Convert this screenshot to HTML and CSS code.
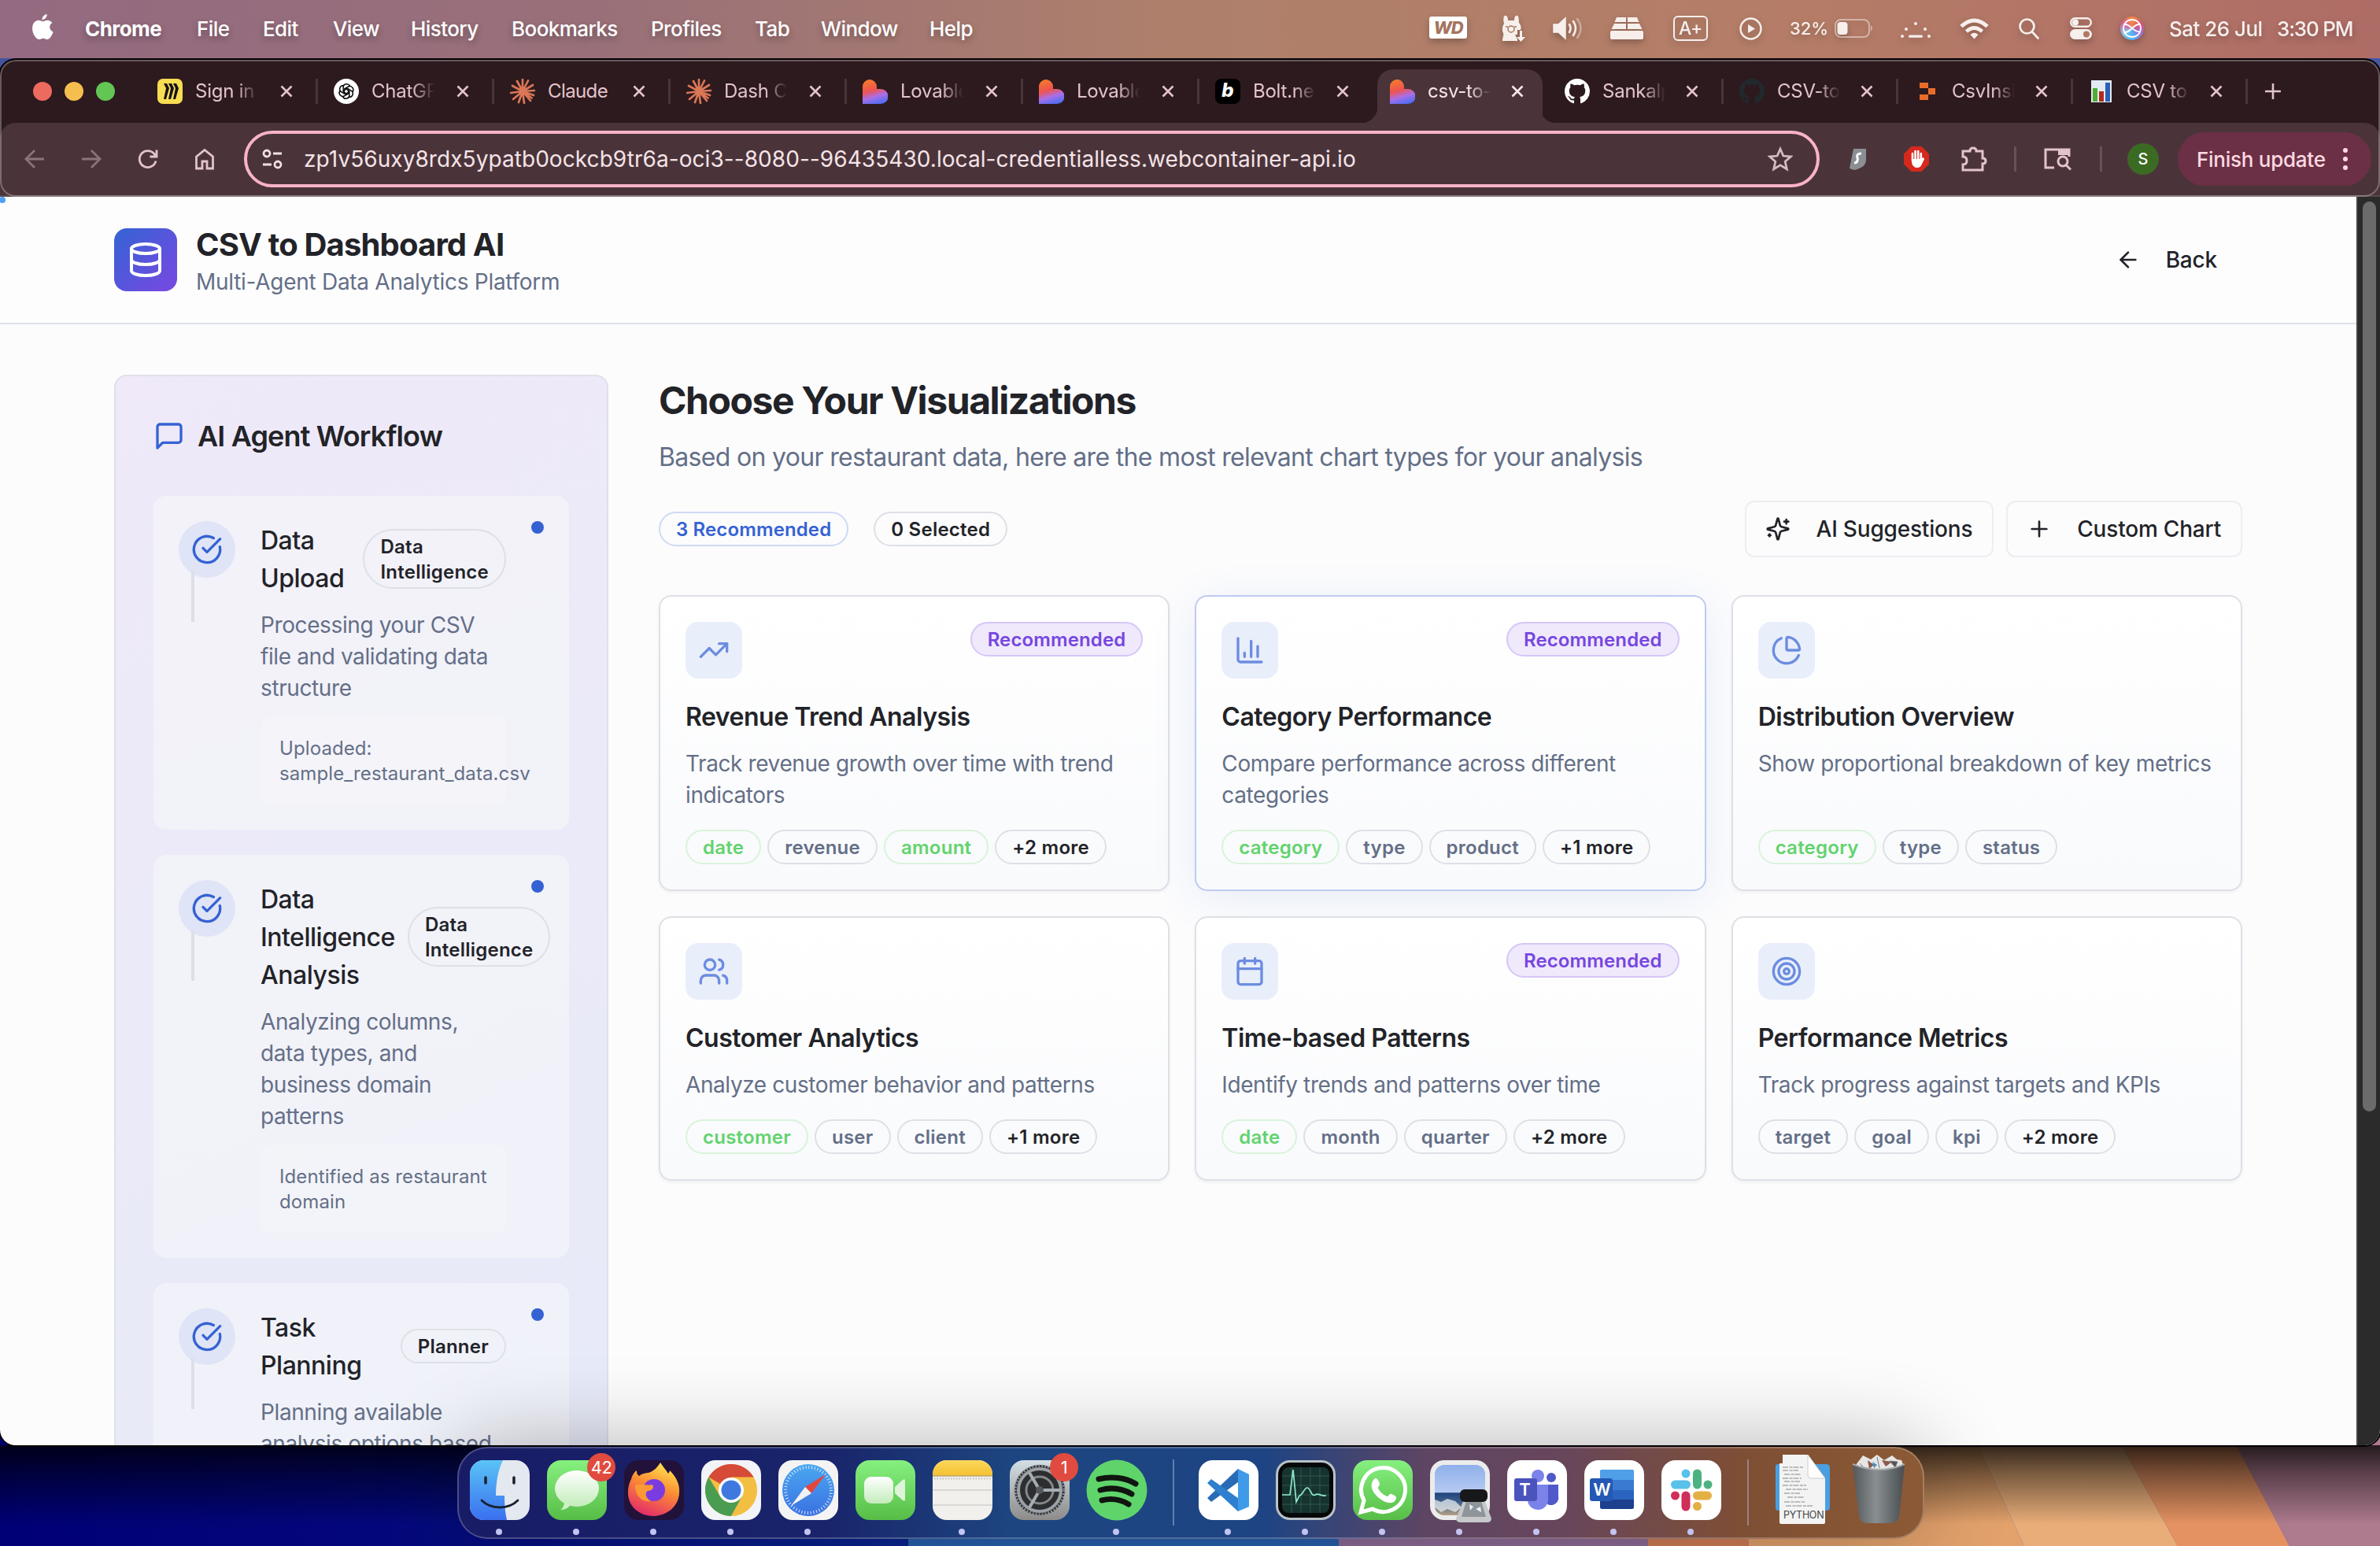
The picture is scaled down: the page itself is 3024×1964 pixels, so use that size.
FILE: index.html
```html
<!DOCTYPE html>
<html lang="en">
<head>
<meta charset="utf-8">
<title>CSV to Dashboard AI</title>
<link rel="stylesheet" href="styles.css">
</head>
<body>
<svg class="defs" width="0" height="0" aria-hidden="true">
  <defs>
    <linearGradient id="heartFill" x1="0.3" y1="0" x2="0.6" y2="1"><stop offset="0" stop-color="#f5792c"/><stop offset=".42" stop-color="#ee5350"/><stop offset=".7" stop-color="#a96fe8"/><stop offset="1" stop-color="#4f6df2"/></linearGradient>
    <linearGradient id="finderBlue" x1="0" y1="0" x2="0" y2="1"><stop offset="0" stop-color="#5ac4f6"/><stop offset="1" stop-color="#3a6ff0"/></linearGradient>
    <linearGradient id="greenFill" x1="0" y1="0" x2="0" y2="1"><stop offset="0" stop-color="#86f07f"/><stop offset="1" stop-color="#57bd47"/></linearGradient>
    <linearGradient id="bubbleFill" x1="0" y1="0" x2="0" y2="1"><stop offset="0" stop-color="#fff"/><stop offset="1" stop-color="#c3ecba"/></linearGradient>
    <linearGradient id="fireFill" x1="0.7" y1="0" x2="0.3" y2="1"><stop offset="0" stop-color="#ffe54e"/><stop offset=".45" stop-color="#fb8b34"/><stop offset="1" stop-color="#e3296b"/></linearGradient>
    <linearGradient id="safariFill" x1="0" y1="0" x2="0" y2="1"><stop offset="0" stop-color="#4aa8f0"/><stop offset="1" stop-color="#3a70e2"/></linearGradient>
    <linearGradient id="greyFill" x1="0" y1="0" x2="0" y2="1"><stop offset="0" stop-color="#d3dfe6"/><stop offset="1" stop-color="#8d8c8a"/></linearGradient>
    <linearGradient id="notesTop" x1="0" y1="0" x2="0" y2="1"><stop offset="0" stop-color="#fbd85c"/><stop offset="1" stop-color="#f5c02f"/></linearGradient>
    <linearGradient id="binFill" x1="0" y1="0" x2="1" y2="0"><stop offset="0" stop-color="#53585b"/><stop offset=".45" stop-color="#8a8f92"/><stop offset="1" stop-color="#474c4f"/></linearGradient>
    <linearGradient id="skyFill" x1="0" y1="0" x2="0" y2="1"><stop offset="0" stop-color="#8fb0ea"/><stop offset=".54" stop-color="#b5caf2"/><stop offset=".56" stop-color="#23457e"/><stop offset=".74" stop-color="#3f5f8a"/><stop offset="1" stop-color="#b3a084"/></linearGradient>
    <linearGradient id="shadeFill" x1="0" y1="0" x2="0" y2="1"><stop offset="0" stop-color="#000" stop-opacity=".78"/><stop offset=".35" stop-color="#000" stop-opacity=".48"/><stop offset="1" stop-color="#000" stop-opacity="0"/></linearGradient>
    <linearGradient id="blueFill" x1="0" y1="0" x2="1" y2="0"><stop offset="0" stop-color="#000074"/><stop offset=".4" stop-color="#03067a"/><stop offset="1" stop-color="#0b2590"/></linearGradient>
    <symbol id="close" viewBox="0 0 16 16"><path d="M1.5 1.5 14.5 14.5M14.5 1.5 1.5 14.5" stroke="currentColor" stroke-width="2.6" fill="none"/></symbol>
    <symbol id="heart" viewBox="0 0 32 32"><path d="M0 32V10a9 9 0 0 1 18 0v3h5a9.500 9.500 0 0 1 0 19z" fill="url(#heartFill)"/></symbol>
    <symbol id="burst" viewBox="0 0 32 32"><path d="M16 16 16 1M16 16 23 2.500M16 16 29 8M16 16 31 15M16 16 30 21M16 16 26 28M16 16 18 31M16 16 11 30M16 16 4 26M16 16 1 18M16 16 3 9M16 16 9 3M16 16 27.500 24.500" stroke="#d97757" stroke-width="2.700" stroke-linecap="round"/></symbol>
    <symbol id="cat" viewBox="0 0 16 16"><path fill="currentColor" d="M8 0C3.580 0 0 3.580 0 8c0 3.540 2.290 6.530 5.470 7.590.4.070.55-.17.55-.38 0-.19-.010-.82-.010-1.490-2.010.37-2.530-.49-2.690-.94-.090-.23-.48-.94-.82-1.130-.28-.15-.68-.52-.010-.53.630-.010 1.080.58 1.230.82.72 1.210 1.870.87 2.330.66.070-.52.280-.87.510-1.070-1.780-.2-3.640-.89-3.640-3.950 0-.87.310-1.590.82-2.150-.080-.2-.36-1.020.080-2.120 0 0 .67-.21 2.200.82.640-.18 1.320-.27 2-.27s1.360.090 2 .27c1.530-1.040 2.200-.82 2.200-.82.440 1.100.160 1.920.080 2.120.510.560.820 1.270.820 2.150 0 3.070-1.870 3.750-3.650 3.950.290.250.540.730.540 1.480 0 1.070-.010 1.930-.010 2.200 0 .210.150.460.550.380A8 8 0 0 0 16 8c0-4.420-3.580-8-8-8z"/></symbol>
    <symbol id="check" viewBox="0 0 24 24"><path d="M21.801 10A10 10 0 1 1 17 3.335"/><path d="m9 11 3 3L22 4"/></symbol>
  </defs>
</svg>

<svg class="wallpaper" viewBox="0 0 3024 1964" aria-hidden="true">
  <rect width="3024" height="1964" fill="#45559f"/>
  <rect y="1700" width="1160" height="264" fill="url(#blueFill)"/>
  <path d="M1154 1700h548v264h-548z" fill="#2860ad"/>
  <path d="M1701 1700h380l13 264h-393z" fill="#8f6c98"/>
  <path d="M2080 1700h120l22 264h-128z" fill="#d17d55"/>
  <path d="M2200 1700h250l122 264h-350z" fill="#e3a26c"/>
  <path d="M2450 1700h170l147 264h-195z" fill="#e8ad79"/>
  <path d="M2620 1700h150l139 264h-142z" fill="#e59262"/>
  <path d="M2769 1700h255v264h-115z" fill="#ad7a8e"/>
  <rect y="1836" width="3024" height="100" fill="url(#shadeFill)"/>
</svg>

<header class="menubar">
  <svg class="apple" viewBox="0 0 26 32"><path fill="#fff" d="M18 0c.3 3.600-2.800 7-6 7C11.600 3.800 14.800.4 18 0zM13 9c1.300 0 3-1.500 5.600-1.500 2.600 0 4.800 1.500 5.900 3.200-4.600 2.800-3.900 9 1.200 11-1.500 4.500-4.300 9.300-7.200 9.300-2 0-2.600-1.300-5-1.300s-3.200 1.300-5 1.300C4.600 31 0 24.300 0 17.600 0 11 4 7.600 7.700 7.600 10.200 7.600 11.800 9 13 9z"/></svg>
  <nav class="menus"><b>Chrome</b><span>File</span><span>Edit</span><span>View</span><span>History</span><span>Bookmarks</span><span>Profiles</span><span>Tab</span><span>Window</span><span>Help</span></nav>
  <div class="status">
    <span class="wd">WD</span>
    <svg width="30" height="34" viewBox="0 0 30 34"><path fill="#f6efec" d="M4 1c3-1 4 3 4 6h8c0-3 1-7 4-6 2 1 2 7 2 9 3 3 3 7 2 9h-4v6h-3l3 6v2H1c0-5 2-7 1-10-2-4-1-9 1-12C2 6 2 2 4 1z"/><path fill="#f6efec" d="M23 20h3v8h4l-5.500 6L19 28h4z"/><circle cx="12" cy="18" r="4" fill="none" stroke="#a87662" stroke-width="1.500"/><path d="M5 15h3m8 0h3" stroke="#a87662" stroke-width="1.500"/></svg>
    <svg width="38" height="30" viewBox="0 0 38 30" fill="none" stroke="#f6efec" stroke-width="2.600" stroke-linecap="round"><path d="M1 10h6l9-8v26l-9-8H1z" fill="#f6efec" stroke-width="1.500"/><path d="M21 10q3 5 0 10M26 6q6 9 0 18"/><path d="M31 3q9 12 0 24" opacity=".4"/></svg>
    <svg width="42" height="30" viewBox="0 0 42 30" fill="#f6efec"><path d="M8 1h12v6H5.500zM22 1h12l2.500 6H22zM5 9h15v7H1.500zM22 9h15l3.500 7H22z"/><rect y="18" width="42" height="11" rx="2"/></svg>
    <span class="aplus">A+</span>
    <svg width="29" height="29" viewBox="0 0 29 29"><circle cx="14.500" cy="14.500" r="13" fill="none" stroke="#f6efec" stroke-width="2.400"/><path d="M11 9v11l9-5.500z" fill="#f6efec"/></svg>
    <span class="pct">32%</span>
    <svg width="50" height="24" viewBox="0 0 50 24"><rect x="1" y="1" width="43" height="22" rx="7" fill="none" stroke="#f6efec" stroke-opacity=".5" stroke-width="2"/><rect x="3.500" y="4" width="13" height="16" rx="4" fill="#f6efec"/><path d="M46 8q4 4 0 8z" fill="#f6efec" opacity=".5"/></svg>
    <svg class="low" width="38" height="20" viewBox="0 0 38 20" fill="#f6efec"><circle cx="19" cy="2" r="2"/><circle cx="7" cy="9" r="2"/><circle cx="31" cy="9" r="2"/><circle cx="2" cy="18" r="2"/><rect x="10" y="16.500" width="18" height="3.200" rx="1.500"/><circle cx="36" cy="18" r="2"/></svg>
    <svg width="37" height="27" viewBox="0 0 37 27" fill="none" stroke="#f6efec" stroke-width="5"><path d="M2 10.500q16.500-15 33 0M8.500 17q10-9 20 0"/><path d="M18.500 26.500l-5-5.500q5-4.500 10 0z" fill="#f6efec" stroke="none"/></svg>
    <svg width="26" height="27" viewBox="0 0 26 27" fill="none" stroke="#f6efec" stroke-width="2.700" stroke-linecap="round"><circle cx="10.500" cy="10.500" r="9"/><path d="m17.500 18 7 7.500"/></svg>
    <svg width="28" height="28" viewBox="0 0 28 28"><rect x="1.200" y="1.200" width="25.600" height="10.600" rx="5.300" fill="none" stroke="#f6efec" stroke-width="2.400"/><circle cx="7" cy="6.500" r="4" fill="#f6efec"/><rect y="15" width="28" height="13" rx="6.500" fill="#f6efec"/><circle cx="21" cy="21.500" r="4" fill="#b27763"/></svg>
    <span class="siri"><svg width="30" height="30" viewBox="0 0 30 30" fill="none" stroke="#fff" stroke-width="1.800"><circle cx="15" cy="15" r="11"/><path d="M6 10c8 0 10 10 18 9M6 20c8 0 10-10 18-10"/></svg></span>
    <span class="date">Sat 26 Jul</span><span class="time">3:30 PM</span>
  </div>
</header>

<main class="window">
  <div class="tabstrip">
    <div class="lights"><i class="red"></i><i class="yellow"></i><i class="green"></i></div>
    <div class="tab"><span class="fav miro"><svg viewBox="0 0 32 32"><path d="M8 6h4l3 6-4 14H8l3-14zM14 6h4l3 6-4 14h-3l3-14zM20 6h4l3 6-4 14h-3l3-14z" fill="#14121c"/></svg></span><span class="label">Sign in</span><svg class="x"><use href="#close"/></svg></div>
    <div class="tab"><span class="fav gpt"><svg viewBox="0 0 32 32" fill="none" stroke="#111" stroke-width="1.500"><g id="petal"><path d="M12 10.500a4.600 4.600 0 0 1 8.500-1.500l-7 4v6.500"/></g><use href="#petal" transform="rotate(60 16 16)"/><use href="#petal" transform="rotate(120 16 16)"/><use href="#petal" transform="rotate(180 16 16)"/><use href="#petal" transform="rotate(240 16 16)"/><use href="#petal" transform="rotate(300 16 16)"/></svg></span><span class="label">ChatGP</span><svg class="x"><use href="#close"/></svg></div>
    <div class="tab"><svg class="fav"><use href="#burst"/></svg><span class="label whole">Claude</span><svg class="x"><use href="#close"/></svg></div>
    <div class="tab"><svg class="fav"><use href="#burst"/></svg><span class="label">Dash C</span><svg class="x"><use href="#close"/></svg></div>
    <div class="tab"><svg class="fav"><use href="#heart"/></svg><span class="label">Lovable</span><svg class="x"><use href="#close"/></svg></div>
    <div class="tab"><svg class="fav"><use href="#heart"/></svg><span class="label">Lovable</span><svg class="x"><use href="#close"/></svg></div>
    <div class="tab slim bare"><span class="fav bolt">b</span><span class="label">Bolt.ne</span><svg class="x"><use href="#close"/></svg></div>
    <div class="tab slim active"><svg class="fav"><use href="#heart"/></svg><span class="label">csv-to-</span><svg class="x"><use href="#close"/></svg></div>
    <div class="tab slim"><svg class="fav white"><use href="#cat"/></svg><span class="label">Sankalp</span><svg class="x"><use href="#close"/></svg></div>
    <div class="tab slim"><svg class="fav dark"><use href="#cat"/></svg><span class="label">CSV-to</span><svg class="x"><use href="#close"/></svg></div>
    <div class="tab slim"><svg class="fav" viewBox="0 0 32 32" fill="#ea6c2a"><path d="M7 5h11v7H7zM18 12h9v8h-9zM7 20h11v7H7z"/></svg><span class="label">CsvInsi</span><svg class="x"><use href="#close"/></svg></div>
    <div class="tab slim"><svg class="fav" viewBox="0 0 32 32"><path fill="#e3ebf2" d="M3 2h26v28H3z"/><path fill="#4fae31" d="M5 12h6v17H5z"/><path fill="#b32a1c" d="M13 16h6v13h-6z"/><path fill="#2c5fb8" d="M21 5h6v24h-6z"/></svg><span class="label">CSV to</span><svg class="x"><use href="#close"/></svg></div>
    <svg class="newtab" viewBox="0 0 22 22"><path d="M11 1v20M1 11h20" stroke="currentColor" stroke-width="2.600"/></svg>
  </div>

  <div class="toolbar">
    <div class="navs">
      <svg viewBox="0 0 26 26" class="dim"><path d="M25 13H2M13 2 2 13l11 11"/></svg>
      <svg viewBox="0 0 26 26" class="dim"><path d="M1 13h23M13 2l11 11-11 11"/></svg>
      <svg viewBox="0 0 26 26"><path d="M23 15.500A10.500 10.500 0 1 1 21 6.500L24 10M24 1.500v8.500h-8.500"/></svg>
      <svg viewBox="0 0 26 28"><path d="M2.500 11 13 2.500 23.500 11v15H16v-9h-6v9H2.500z"/></svg>
    </div>
    <div class="omnibox">
      <svg class="tune" viewBox="0 0 26 26"><circle cx="6" cy="6" r="4"/><path d="M14 6h11M1 20h11"/><circle cx="20" cy="20" r="4"/></svg>
      <span class="url">zp1v56uxy8rdx5ypatb0ockcb9tr6a-oci3--8080--96435430.local-credentialless.webcontainer-api.io</span>
      <svg class="star" viewBox="0 0 30 30"><path d="m15 3 3.600 8.300 9 .8-6.800 6 2 8.900L15 22.300 7.200 27l2-8.900-6.800-6 9-.8z"/></svg>
    </div>
    <div class="exts">
      <svg width="24" height="30" viewBox="0 0 24 30"><path d="M7 2h16v14c0 7-6 11-15 13l-6-2z" fill="#8b8f93"/><path d="M17 8c-5 0-6 2-5 5s0 7-4 7" stroke="#fff" stroke-width="3" fill="none"/></svg>
      <svg width="32" height="32" viewBox="0 0 32 32"><path d="M9.500 0h13L32 9.500v13L22.500 32h-13L0 22.500v-13z" fill="#d7281d"/><path d="M11 9v11q1 6 6 6 4 0 5-4l3-6q-1-2-3 1V9" stroke="#fff" stroke-width="2" stroke-linejoin="round" stroke-linecap="round" fill="none"/><path d="M11 16h11v6q-2 4-5 4-5 0-6-6z" fill="#fff"/><path d="M11 9v9M14.600 6v12M18.200 6v12M21.800 9v9" stroke="#fff" stroke-width="2.600" stroke-linecap="round"/></svg>
      <svg width="34" height="32" viewBox="0 0 34 32" fill="none" stroke="#e3c3cc" stroke-width="3"><path d="M3 6h9q0-4 4-4t4 4h8v9q4 0 4 3.500T28 22v8H3v-7q5 0 5-5t-5-5z"/></svg>
      <i></i>
      <svg width="36" height="30" viewBox="0 0 36 30" fill="none" stroke="#e3c3cc" stroke-width="3"><path d="M14 26H3V3h30v9"/><path d="M19 3h14v7H19z" fill="#e3c3cc" stroke="none"/><circle cx="25" cy="18" r="6"/><path d="m29 22.500 6 6"/></svg>
      <i></i>
      <b class="avatar">S</b>
      <span class="finish">Finish update<svg width="6" height="30" viewBox="0 0 6 30" fill="#ffd9e2"><circle cx="3" cy="4" r="3"/><circle cx="3" cy="15" r="3"/><circle cx="3" cy="26" r="3"/></svg></span>
    </div>
  </div>

  <div class="viewport">
    <div class="page">
      <header class="apphead">
        <div class="brand">
          <span class="logo"><svg class="lu" viewBox="0 0 24 24"><ellipse cx="12" cy="5" rx="9" ry="3"/><path d="M3 5V19A9 3 0 0 0 21 19V5"/><path d="M3 12A9 3 0 0 0 21 12"/></svg></span>
          <div><h1>CSV to Dashboard AI</h1><p>Multi-Agent Data Analytics Platform</p></div>
        </div>
        <button class="back"><svg class="lu" viewBox="0 0 24 24"><path d="m12 19-7-7 7-7"/><path d="M19 12H5"/></svg>Back</button>
      </header>

      <div class="columns">
        <aside class="panel">
          <h2><svg class="lu" viewBox="0 0 24 24"><path d="M21 15a2 2 0 0 1-2 2H7l-4 4V5a2 2 0 0 1 2-2h14a2 2 0 0 1 2 2z"/></svg>AI Agent Workflow</h2>
          <section class="step">
            <span class="disc"><svg class="lu"><use href="#check"/></svg></span>
            <div class="body">
              <div class="row"><h3>Data<br>Upload</h3><span class="pill">Data<br>Intelligence</span></div>
              <p>Processing your CSV<br>file and validating data<br>structure</p>
              <div class="note">Uploaded:<br>sample_restaurant_data.csv</div>
            </div>
            <i class="dot"></i>
          </section>
          <section class="step">
            <span class="disc"><svg class="lu"><use href="#check"/></svg></span>
            <div class="body">
              <div class="row"><h3>Data<br>Intelligence<br>Analysis</h3><span class="pill">Data<br>Intelligence</span></div>
              <p>Analyzing columns,<br>data types, and<br>business domain<br>patterns</p>
              <div class="note">Identified as restaurant<br>domain</div>
            </div>
            <i class="dot"></i>
          </section>
          <section class="step">
            <span class="disc"><svg class="lu"><use href="#check"/></svg></span>
            <div class="body">
              <div class="row"><h3>Task<br>Planning</h3><span class="pill">Planner</span></div>
              <p>Planning available<br>analysis options based<br>on your data</p>
            </div>
            <i class="dot"></i>
          </section>
        </aside>

        <section class="content">
          <h2>Choose Your Visualizations</h2>
          <p class="lead">Based on your restaurant data, here are the most relevant chart types for your analysis</p>
          <div class="actions">
            <span class="pill blue">3 Recommended</span><span class="pill">0 Selected</span>
            <button class="first"><svg class="lu" viewBox="0 0 24 24"><path d="M9.937 15.500A2 2 0 0 0 8.500 14.063l-6.135-1.582a.5.5 0 0 1 0-.962L8.500 9.936A2 2 0 0 0 9.937 8.500l1.582-6.135a.5.5 0 0 1 .963 0L14.063 8.500A2 2 0 0 0 15.500 9.937l6.135 1.581a.5.5 0 0 1 0 .964L15.500 14.063a2 2 0 0 0-1.437 1.437l-1.582 6.135a.5.5 0 0 1-.963 0z"/><path d="M20 3v4M22 5h-4M4 17v2M5 18H3"/></svg>AI Suggestions</button>
            <button><svg class="lu" viewBox="0 0 24 24"><path d="M5 12h14M12 5v14"/></svg>Custom Chart</button>
          </div>
          <div class="cards">
            <article class="card">
              <div class="top"><span class="glyph"><svg class="lu" viewBox="0 0 24 24"><path d="m22 7-8.500 8.500-5-5L2 17"/><path d="M16 7h6v6"/></svg></span><span class="pill rec">Recommended</span></div>
              <h3>Revenue Trend Analysis</h3><p>Track revenue growth over time with trend indicators</p>
              <div class="tags"><span class="pill ok">date</span><span class="pill mute">revenue</span><span class="pill ok">amount</span><span class="pill">+2 more</span></div>
            </article>
            <article class="card hover">
              <div class="top"><span class="glyph"><svg class="lu" viewBox="0 0 24 24"><path d="M3 3v16a2 2 0 0 0 2 2h16"/><path d="M18 17V9M13 17V5M8 17v-3"/></svg></span><span class="pill rec">Recommended</span></div>
              <h3>Category Performance</h3><p>Compare performance across different categories</p>
              <div class="tags"><span class="pill ok">category</span><span class="pill mute">type</span><span class="pill mute">product</span><span class="pill">+1 more</span></div>
            </article>
            <article class="card">
              <div class="top"><span class="glyph"><svg class="lu" viewBox="0 0 24 24"><path d="M21 12c.552 0 1.005-.449.95-.998a10 10 0 0 0-8.953-8.951c-.55-.055-.998.398-.998.95v8a1 1 0 0 0 1 1z"/><path d="M21.210 15.890A10 10 0 1 1 8 2.830"/></svg></span></div>
              <h3>Distribution Overview</h3><p>Show proportional breakdown of key metrics</p>
              <div class="tags"><span class="pill ok">category</span><span class="pill mute">type</span><span class="pill mute">status</span></div>
            </article>
            <article class="card">
              <div class="top"><span class="glyph"><svg class="lu" viewBox="0 0 24 24"><path d="M16 21v-2a4 4 0 0 0-4-4H6a4 4 0 0 0-4 4v2"/><circle cx="9" cy="7" r="4"/><path d="M22 21v-2a4 4 0 0 0-3-3.870M16 3.130a4 4 0 0 1 0 7.750"/></svg></span></div>
              <h3>Customer Analytics</h3><p>Analyze customer behavior and patterns</p>
              <div class="tags"><span class="pill ok">customer</span><span class="pill mute">user</span><span class="pill mute">client</span><span class="pill">+1 more</span></div>
            </article>
            <article class="card">
              <div class="top"><span class="glyph"><svg class="lu" viewBox="0 0 24 24"><path d="M8 2v4M16 2v4M3 10h18"/><rect width="18" height="18" x="3" y="4" rx="2"/></svg></span><span class="pill rec">Recommended</span></div>
              <h3>Time-based Patterns</h3><p>Identify trends and patterns over time</p>
              <div class="tags"><span class="pill ok">date</span><span class="pill mute">month</span><span class="pill mute">quarter</span><span class="pill">+2 more</span></div>
            </article>
            <article class="card">
              <div class="top"><span class="glyph"><svg class="lu" viewBox="0 0 24 24"><circle cx="12" cy="12" r="10"/><circle cx="12" cy="12" r="6"/><circle cx="12" cy="12" r="2"/></svg></span></div>
              <h3>Performance Metrics</h3><p>Track progress against targets and KPIs</p>
              <div class="tags"><span class="pill mute">target</span><span class="pill mute">goal</span><span class="pill mute">kpi</span><span class="pill">+2 more</span></div>
            </article>
          </div>
        </section>
      </div>
    </div>
    <div class="scroll"><i></i></div>
    <i class="spark"></i>
  </div>
</main>

<footer class="dock">
  <span class="app on"><svg viewBox="0 0 76 76"><rect width="76" height="76" rx="18" fill="#e4e8ef"/><path d="M42 0H18A18 18 0 0 0 0 18v40a18 18 0 0 0 18 18h29c-2-9-3-18-3-31H33C33 28 36 12 42 0z" fill="url(#finderBlue)"/><path d="M20 22v7M56 22v7" stroke="#17212e" stroke-width="3.500" stroke-linecap="round"/><path d="M15 51c12 12 34 12 46 0" fill="none" stroke="#17212e" stroke-width="2.800" stroke-linecap="round"/></svg></span>
  <span class="app on"><svg viewBox="0 0 76 76"><rect width="76" height="76" rx="18" fill="url(#greenFill)"/><ellipse cx="38" cy="36" rx="28" ry="23" fill="url(#bubbleFill)"/><path d="M22 52c0 6-2 9-5 11 7 0 11-3 13-7z" fill="#cdf0c5"/></svg><em>42</em></span>
  <span class="app on"><svg viewBox="0 0 76 76"><rect width="76" height="76" rx="18" fill="#22123a"/><path d="M9 24c1-5 4-9 7-11 0 4 1 6 3 7 4-3 8-4 12-4C38 14 43 8 46 3c4 6 7 9 10 14 1-1 2-3 2-4 9 9 13 19 12 29-1 16-14 28-32 29C19 71 6 59 5 43c0-8 1-13 4-19z" fill="url(#fireFill)"/><circle cx="38" cy="38" r="14" fill="#7a3ce0"/><path d="M14 32c8-3 14 1 22-1 3 4-1 8-6 8-4 2-3 9 4 13-12 2-20-8-20-20z" fill="#fb9a35"/></svg></span>
  <span class="app on"><svg viewBox="0 0 76 76"><rect width="76" height="76" rx="18" fill="#f3f4f8"/><circle cx="38" cy="38" r="33" fill="#f3bf43"/><path d="M38 38 9.400 21.500A33 33 0 0 1 66.600 21.500H38z" fill="#d64a38"/><path d="M9.400 21.500A33 33 0 0 0 38 71L52 46 24 46z" fill="#4a9c50"/><path d="M38 71 52.300 46 55 22h11.600A33 33 0 0 1 38 71z" fill="#f3bf43"/><circle cx="38" cy="38" r="16" fill="#fff"/><circle cx="38" cy="38" r="12.500" fill="#3f79e0"/></svg></span>
  <span class="app on"><svg viewBox="0 0 76 76"><rect width="76" height="76" rx="18" fill="#f4f4f4"/><circle cx="38" cy="38" r="33" fill="url(#safariFill)"/><circle cx="38" cy="38" r="29" fill="none" stroke="#d9e9fb" stroke-width="4" stroke-dasharray="1 2.800"/><path d="M60 18 42 42 34 34z" fill="#e2473d"/><path d="M16 58 34 34l8 8z" fill="#f2f2f2"/></svg></span>
  <span class="app"><svg viewBox="0 0 76 76"><rect width="76" height="76" rx="18" fill="url(#greenFill)"/><rect x="11" y="21" width="37" height="34" rx="9" fill="url(#bubbleFill)"/><path d="M50 34 60 25q3-2 3 1v24q0 3-3 1L50 42z" fill="#dff5da"/></svg></span>
  <span class="app on"><svg viewBox="0 0 76 76"><rect width="76" height="76" rx="18" fill="#f2f0ec"/><path d="M0 20v-2A18 18 0 0 1 18 0h40a18 18 0 0 1 18 18v2z" fill="url(#notesTop)"/><path d="M0 20h76" stroke="#b9a479" stroke-width="1.500"/><path d="M2 23.500h72" stroke="#bbb" stroke-width="2" stroke-dasharray="1.500 2"/><path d="M0 38h76M0 57h76" stroke="#d2d0d0" stroke-width="1.600"/></svg></span>
  <span class="app"><svg viewBox="0 0 76 76"><rect width="76" height="76" rx="18" fill="url(#greyFill)"/><circle cx="38" cy="38" r="32" fill="#2d2e30"/><circle cx="38" cy="38" r="27" fill="none" stroke="#9ba1a6" stroke-width="4"/><circle cx="38" cy="38" r="31" fill="none" stroke="#8f9499" stroke-width="3" stroke-dasharray="2 2"/><circle cx="38" cy="38" r="17" fill="none" stroke="#84898d" stroke-width="3"/><path d="M38 38h26M38 38 25 16M38 38 25 60" stroke="#a7adb2" stroke-width="4"/><circle cx="38" cy="38" r="5" fill="#55585b"/></svg><em>1</em></span>
  <span class="app on"><svg viewBox="0 0 76 76"><circle cx="38" cy="38" r="38.500" fill="#5fd46b"/><path d="M15 24c16-4 34-2 47 6M17 38c14-4 28-2 40 5M19 51c12-3 24-1 34 5" fill="none" stroke="#101510" stroke-linecap="round" stroke-width="7"/></svg></span>
  <i class="rule"></i>
  <span class="app on"><svg viewBox="0 0 76 76"><rect width="76" height="76" rx="18" fill="#fff"/><path d="M50 11 11 48l5 5 38-28z" fill="#2a6bb5"/><path d="M16 24l-5 5 39 36 4-14z" fill="#2e80ce"/><path d="M50 11 64 18v41l-14 6z" fill="#3f9be8"/></svg></span>
  <span class="app on"><svg viewBox="0 0 76 76"><rect width="76" height="76" rx="18" fill="#b9c2c8"/><rect x="3" y="3" width="70" height="70" rx="15" fill="#070808"/><rect x="8" y="9" width="60" height="58" rx="8" fill="#16332f"/><path d="M20 9v58M32 9v58M44 9v58M56 9v58M8 20h60M8 32h60M8 44h60M8 56h60" stroke="#2f5750"/><path d="M8 44h10l4-32 4 41 4-8c4 0 6-10 10-10s5 12 10 9 6 2 14 1" fill="none" stroke="#8eeacb" stroke-width="1.700"/></svg></span>
  <span class="app on"><svg viewBox="0 0 76 76"><rect width="76" height="76" rx="18" fill="url(#greenFill)"/><path d="M10 66l4-15a28 28 0 1 1 11 11z" fill="none" stroke="#fff" stroke-width="5"/><path d="M27 24c3-3 6 2 7 6 0 3-3 4-2 6 3 5 7 8 11 10 3 0 3-4 6-3 3 1 7 3 6 6-3 8-14 6-22-1C25 41 20 32 27 24z" fill="#fff"/></svg></span>
  <span class="app on"><svg viewBox="0 0 76 76"><rect width="76" height="76" rx="18" fill="#ececec"/><rect x="6" y="6" width="64" height="64" rx="12" fill="url(#skyFill)"/><path d="M6 50l8 3 8-4 10 3 8 8-8 6-10-4-8 4-8-6z" fill="#e6ebef" opacity=".75"/><path d="M43 50h26l9 24q0 5-6 5H39q-6 0-6-5z" fill="#c6c8ca"/><path d="M46 52h19l6 20H40z" fill="#8e959b"/><path d="M50 56l5 3-4 5zM58 62l6-3 1 7z" fill="#e9eef4"/><rect x="38" y="37" width="35" height="16" rx="6" fill="#17181a"/></svg></span>
  <span class="app on"><svg viewBox="0 0 76 76"><rect width="76" height="76" rx="18" fill="#fff"/><circle cx="39" cy="20" r="8" fill="#7b83eb"/><circle cx="56" cy="22" r="6" fill="#5059c9"/><path d="M44 31h21v14a9.500 9.500 0 0 1-18 6z" fill="#5059c9"/><path d="M26 31h26v18a13 13 0 0 1-26 2z" fill="#7b83eb"/><rect x="9" y="23" width="29" height="29" rx="3" fill="#4b53bc"/></svg><b>T</b></span>
  <span class="app on"><svg viewBox="0 0 76 76"><rect width="76" height="76" rx="18" fill="#fff"/><rect x="20" y="12" width="43" height="50" rx="3" fill="#2b64c0"/><path d="M20 25V15q0-3 3-3h37q3 0 3 3v10z" fill="#4f9fe8"/><path d="M20 25h43v13H20z" fill="#3a7ad0"/><path d="M20 50h43v9q0 3-3 3H23q-3 0-3-3z" fill="#1d3f8e"/><rect x="7" y="23" width="29" height="29" rx="3" fill="#2458b4"/></svg><b>W</b></span>
  <span class="app on"><svg viewBox="0 0 76 76" stroke-width="11" stroke-linecap="round"><rect width="76" height="76" rx="18" fill="#fff"/><path d="M17.500 31h14" stroke="#59c1ea"/><path d="M31 17v.1" stroke="#59c1ea"/><path d="M45.500 17v14M59 31v.1" stroke="#4db281"/><path d="M45.500 45h13M45.500 58.500v.1" stroke="#e3b043"/><path d="M31 45v14M17.500 45v.1" stroke="#cf2f58"/></svg></span>
  <i class="rule"></i>
  <span class="app tall"><svg viewBox="0 0 76 90"><path d="M3 16q0-3 3-3h61q5 0 5 5v50q0 4-4 4H6q-3 0-3-4z" fill="#4a9fe0"/><path d="M12 1h32l22 30v56q0 2-2 2H10q-2 0-2-2V12h4z" fill="#f3f3f3"/><path d="M44 1l22 30H48q-4 0-4-4z" fill="#fff" stroke="#ccc"/><path d="M12 17h26M12 21h20M14 26h22M12 31h24M14 35h20M12 40h30M16 45h28M14 50h20M18 55h22M14 61h26M16 66h34" stroke="#aaa" stroke-width="1.500" stroke-dasharray="7 1.500 4 1"/></svg><small>PYTHON</small></span>
  <span class="app tall"><svg viewBox="0 0 76 90"><path d="M7 14 16 2l10 5 8-6 9 7 10-6 6 5 6 1 3 8-6 8H14z" fill="#e7e6e4"/><path d="M22 8l8 6-6 5zM40 8l5 8 8-6z" fill="#8b5a4a"/><path d="M28 10l6 4-4 4z" fill="#3f8fc0"/><path d="M50 9l7 8 3-7zM12 12l8 8M34 4l3 14" stroke="#777" fill="#555"/><path d="M3 13q35 14 66 0l-7 66q-1 9-13 9H23q-11 0-12-9z" fill="url(#binFill)"/><path d="M3 13q35 14 66 0" fill="none" stroke="#a4a8aa" stroke-width="2"/></svg></span>
</footer>
</body>
</html>
```

FILE: styles.css
```css
* { box-sizing: border-box; margin: 0; padding: 0; }
body { width: 3024px; height: 1964px; overflow: hidden; font-family: Inter, "Liberation Sans", sans-serif; color: #222328; position: relative; background: #03067a; }
i, em { font-style: normal; }
svg { display: block; flex: none; }
.defs { position: absolute; }
.wallpaper { position: absolute; inset: 0; width: 3024px; height: 1964px; z-index: -1; }

/* menu bar */
.menubar { height: 74px; display: flex; align-items: center; padding: 0 0 2px 41px; background: linear-gradient(90deg, #936a80 0, #997079 25%, #ae806b 50%, #b57d67 75%, #ae6c66 100%); color: #fff; font-size: 26px; font-weight: 500; }
.apple { width: 27px; height: 33px; margin: -4px 40px 0 0; }
.menus { display: grid; grid-template-columns: 142px 84px 89px 99px 128px 177px 132px 84px 138px 80px; width: 1708px; white-space: nowrap; text-shadow: 0 4px 8px rgba(0,0,0,.3); letter-spacing: -.022em; }
.menus b { font-weight: 700; }
.status { display: grid; grid-template-columns: 92px 65px 73px 80px 84px 64px 57px 84px 75px 75px 65px 64px 62px 137px 110px; align-items: center; white-space: nowrap; color: #f6efec; letter-spacing: -.02em; filter: drop-shadow(0 4px 4px rgba(0,0,0,.25)); }
.wd { width: 48px; height: 28px; border-radius: 3px; background: #fff; color: #a5745f; font: italic 800 22px/28px Inter, sans-serif; text-align: center; letter-spacing: -1px; margin-top: -2px; }
.aplus { width: 44px; height: 32px; border: 2px solid #f6efec; border-radius: 6px; text-align: center; font-size: 23px; line-height: 28px; }
.pct { font-size: 22px; letter-spacing: 0; }
.low { margin-top: 4px; }
.siri { width: 30px; height: 30px; border-radius: 50%; background: conic-gradient(#f08d3e, #e04f72, #9b6fe0, #4db5f2, #86c3ee, #e05c97, #f08d3e); }
.time { letter-spacing: -.045em; }

/* browser window */
.window { position: relative; width: 3024px; height: 1760px; margin-top: 2px; border-radius: 20px; overflow: hidden; background: #2d1a1e; box-shadow: 0 0 0 2px #050205; }
.window::after { content: ""; position: absolute; inset: 0; border-radius: 20px; box-shadow: inset 0 0 0 2px rgba(255,255,255,.28); pointer-events: none; height: 174px; clip-path: inset(0); }
.tabstrip { height: 80px; display: flex; align-items: center; color: #e3c3cc; font-size: 24px; }
.lights { display: flex; gap: 16px; padding-left: 42px; width: 180px; }
.lights i { width: 24px; height: 24px; border-radius: 50%; }
.red { background: #ed6a5f; }
.yellow { background: #f5bf4f; }
.green { background: #62c554; }
.tab { width: 224px; height: 32px; padding-left: 20px; display: flex; align-items: center; border-right: 3px solid #4a343a; position: relative; }
.tab.slim { width: 222px; }
.fav { width: 32px; height: 32px; flex: none; margin-right: 16px; }
.label { width: 80px; overflow: hidden; white-space: nowrap; letter-spacing: -.01em; line-height: 32px; -webkit-mask-image: linear-gradient(90deg, #000 65%, transparent); mask-image: linear-gradient(90deg, #000 65%, transparent); }
.whole { -webkit-mask-image: none; mask-image: none; letter-spacing: -.025em; }
.x { width: 16px; height: 16px; margin-left: 28px; }
.slim .x { margin-left: 26px; }
.miro { background: #f8dc52; border-radius: 7px; }
.gpt { background: #fff; border-radius: 50%; }
.bolt { background: #000; border-radius: 8px; color: #fff; font: italic 800 24px/30px Inter, sans-serif; text-align: center; }
.white { color: #fff; }
.dark { color: #22292e; }
.bare, .active { border-right-color: transparent; }
.active { color: #f8e6ea; z-index: 1; }
.active::before { content: ""; position: absolute; z-index: -1; left: 4px; width: 210px; top: -12px; height: 68px; border-radius: 20px 20px 0 0; background: #4a343a; }
.active::after { content: ""; position: absolute; z-index: -1; left: -16px; right: -12px; bottom: -24px; height: 20px; background: radial-gradient(circle at 0 0, transparent 20px, #4a343a 20.5px) left / 20px 20px no-repeat, radial-gradient(circle at 100% 0, transparent 20px, #4a343a 20.5px) right / 20px 20px no-repeat; }
.newtab { width: 22px; height: 22px; margin-left: 21px; }

.toolbar { height: 94px; background: #4a343a; border-bottom: 2px solid #574a4b; border-radius: 20px 20px 0 0; display: flex; align-items: center; position: relative; }
.navs { display: flex; gap: 46px; width: 310px; padding-left: 31px; fill: none; stroke: #e3c3cc; stroke-width: 2.8; }
.navs svg { width: 26px; height: 28px; }
.navs .dim { stroke: #8b7479; }
.omnibox { width: 2002px; height: 72px; border: 4px solid #f9b3c6; border-radius: 36px; display: flex; align-items: center; padding-left: 19px; color: #f5e3e7; }
.tune { width: 26px; height: 26px; fill: none; stroke: #f0dfe3; stroke-width: 2.8; margin-right: 27px; }
.url { flex: 1; font-size: 28px; white-space: nowrap; letter-spacing: .0023em; }
.star { width: 32px; height: 32px; margin-right: 30px; fill: none; stroke: #d3bcc2; stroke-width: 2.6; }
.exts { display: grid; grid-template-columns: 71px 72px 68px 37px 72px 35px 64px 246px; align-items: center; margin-left: 36px; }
.exts i { width: 3px; height: 32px; background: #6b5157; }
.avatar { width: 40px; height: 40px; border-radius: 50%; background: #3b6b22; color: #fff; font-size: 20px; font-weight: 500; line-height: 40px; text-align: center; }
.finish { width: 246px; height: 68px; border-radius: 34px; background: #6b3045; color: #ffd9e2; font-size: 26px; font-weight: 500; display: flex; align-items: center; justify-content: space-between; padding: 0 30px 0 24px; white-space: nowrap; letter-spacing: -.01em; }

/* page */
.viewport { position: relative; display: flex; height: 1586px; overflow: hidden; background: #fcfcfd; }
.page { width: 2994px; }
.scroll { width: 30px; background: #2b2b2b; border-left: 2px solid #444; padding: 6px 0 0 6px; }
.scroll i { display: block; width: 17px; height: 1156px; border-radius: 9px; background: #6b6b6b; }
.spark { position: absolute; left: -1px; top: 0; width: 8px; height: 8px; border-radius: 50%; background: #4fa0f5; }
.lu { fill: none; stroke: currentColor; stroke-width: 2; stroke-linecap: round; stroke-linejoin: round; width: 40px; height: 40px; }
.apphead { height: 162px; padding: 32px 145px; border-bottom: 2px solid #dde1e7; display: flex; justify-content: space-between; align-items: center; background: #fdfdfe; }
.brand { display: flex; align-items: center; gap: 24px; }
.logo { width: 80px; height: 80px; border-radius: 16px; background: linear-gradient(135deg, #3463d4, #7a48e2); color: #fff; display: flex; align-items: center; justify-content: center; }
.logo .lu { width: 48px; height: 48px; }
h1 { font-size: 40px; line-height: 56px; font-weight: 700; letter-spacing: -.021em; padding-top: 1px; margin-bottom: -1px; }
.brand p { font-size: 28px; line-height: 40px; color: #646f87; letter-spacing: -.01em; }
button { font: 500 28px/40px Inter, sans-serif; letter-spacing: -.007em; color: #222328; background: none; border: 2px solid #eceef2; border-radius: 12px; height: 72px; padding: 0 24px; display: flex; align-items: center; gap: 32px; white-space: nowrap; }
button .lu { width: 32px; height: 32px; }
.first { margin-left: auto; margin-right: 16px; }
.first, .first + button { padding: 0 25px 0 24px; }
.back { border: 0; padding: 0 32px; }
.columns { display: flex; align-items: flex-start; gap: 64px; padding: 64px 145px 0; }
.panel { width: 628px; height: 2200px; flex: none; border: 2px solid #dfe1e9; border-radius: 16px; padding: 48px; background: linear-gradient(155deg, #efe9f9 0, #ebeaf8 30%, #e7eaf8 62%, #e9e9f8 100%); }
.panel h2 { display: flex; align-items: center; gap: 16px; font-size: 36px; line-height: 56px; font-weight: 600; margin-bottom: 48px; letter-spacing: -.024em; }
.panel h2 .lu { color: #3562d3; }
.step { position: relative; display: flex; gap: 32px; align-items: flex-start; width: 528px; padding: 32px; margin-bottom: 32px; border-radius: 16px; background: rgba(247,248,250,.55); }
.step::after { content: ""; position: absolute; left: 48px; top: 96px; width: 4px; height: 64px; background: #dcdfe6; }
.disc { width: 72px; height: 72px; flex: none; border-radius: 50%; background: #dfe4f6; color: #3562d3; display: flex; align-items: center; justify-content: center; }
.body { width: 312px; flex: none; }
.dot { width: 16px; height: 16px; border-radius: 50%; background: #3562d3; flex: none; }
.row { display: flex; align-items: center; justify-content: space-between; gap: 16px; }
.row h3 { font-size: 32px; line-height: 48px; font-weight: 500; letter-spacing: -.015em; flex: none; padding-top: 1px; margin-bottom: -1px; }
.body p { font-size: 28px; line-height: 40px; margin-top: 16px; color: #646f87; letter-spacing: -.014em; white-space: nowrap; }
.note { margin-top: 16px; padding: 25px 24px 23px; border-radius: 12px; background: rgba(248,248,251,.4); color: #646f87; font-size: 24px; line-height: 32px; white-space: nowrap; letter-spacing: .004em; }
.pill { flex: none; display: inline-block; padding: 5px 20px 3px; border: 2px solid #dde0e6; border-radius: 38px; font-size: 24px; line-height: 32px; font-weight: 600; white-space: nowrap; letter-spacing: .01em; }

.content { width: 2012px; }
.content > h2 { font-size: 48px; line-height: 64px; font-weight: 700; letter-spacing: -.0295em; padding-top: 1px; }
.lead { margin-top: 16px; font-size: 32px; line-height: 48px; color: #646f87; letter-spacing: -.0212em; }
.actions { display: flex; align-items: center; margin: 31px 0 48px; }
.actions .pill { margin-right: 32px; }
.blue { color: #3562d3; border-color: #cfd9f5; }
.actions .blue, .rec { letter-spacing: .005em; }
.cards { display: grid; grid-template-columns: repeat(3, 1fr); gap: 32px; }
.card { border: 2px solid #dde0e6; border-radius: 16px; padding: 32px; background: linear-gradient(180deg, #fff, #f9fafc); display: flex; flex-direction: column; box-shadow: 0 2px 4px rgba(0,0,0,.05); }
.hover { border-color: #bfcbf0; box-shadow: 0 10px 60px -6px rgba(53,98,211,.13); }
.top { display: flex; justify-content: space-between; align-items: flex-start; }
.glyph { width: 72px; height: 72px; border-radius: 16px; background: #e9eefb; color: #6b8de0; display: flex; align-items: center; justify-content: center; }
.rec { color: #7746e0; background: #efe9fb; border-color: #d5c6f7; }
.card h3 { font-size: 32px; line-height: 48px; font-weight: 600; margin-top: 25px; letter-spacing: -.015em; }
.card p { font-size: 28px; line-height: 40px; margin: 15px 0 24px; color: #646f87; letter-spacing: -.0145em; }
.tags { display: flex; gap: 8px; margin-top: auto; }
.ok { color: #62d36e; border-color: #d9f3dc; }
.mute { color: #646f87; }

/* dock */
.dock { position: relative; z-index: 2; width: 1864px; height: 117px; margin: 2px 0 0 581px; padding: 17px 0 0 16px; display: flex; gap: 22px; border-radius: 38px; background: linear-gradient(90deg, #181c66 0, #19246a 25%, #1d4680 38%, #1e4483 55%, #5e4563 66%, #67465c 75%, #7f4f34 88%, #8c5a35 100%); box-shadow: inset 0 0 0 2px rgba(255,255,255,.22), 0 0 110px rgba(0,0,0,.3); }
.app { position: relative; width: 76px; height: 76px; flex: none; }
.app svg { width: 76px; height: 76px; overflow: visible; }
.on::after { content: ""; position: absolute; left: 33px; top: 87px; width: 8px; height: 8px; border-radius: 50%; background: #c3c4f2; }
.app em { position: absolute; left: 51px; top: -9px; width: 36px; height: 36px; border-radius: 50%; background: #e14b3f; color: #fff; font-size: 22px; line-height: 36px; text-align: center; letter-spacing: -.5px; }
.app b { position: absolute; left: 8px; top: 23px; width: 29px; font-size: 22px; line-height: 29px; font-weight: 600; color: #fff; text-align: center; }
.rule { width: 2px; height: 84px; margin: -1px 9px 0 11px; background: rgba(190,190,230,.45); flex: none; }
.tall { margin-top: -8px; }
.tall svg { height: 90px; }
.tall small { position: absolute; left: 13px; top: 70px; font-size: 12.5px; line-height: 16px; color: #444; letter-spacing: -.3px; }
```
